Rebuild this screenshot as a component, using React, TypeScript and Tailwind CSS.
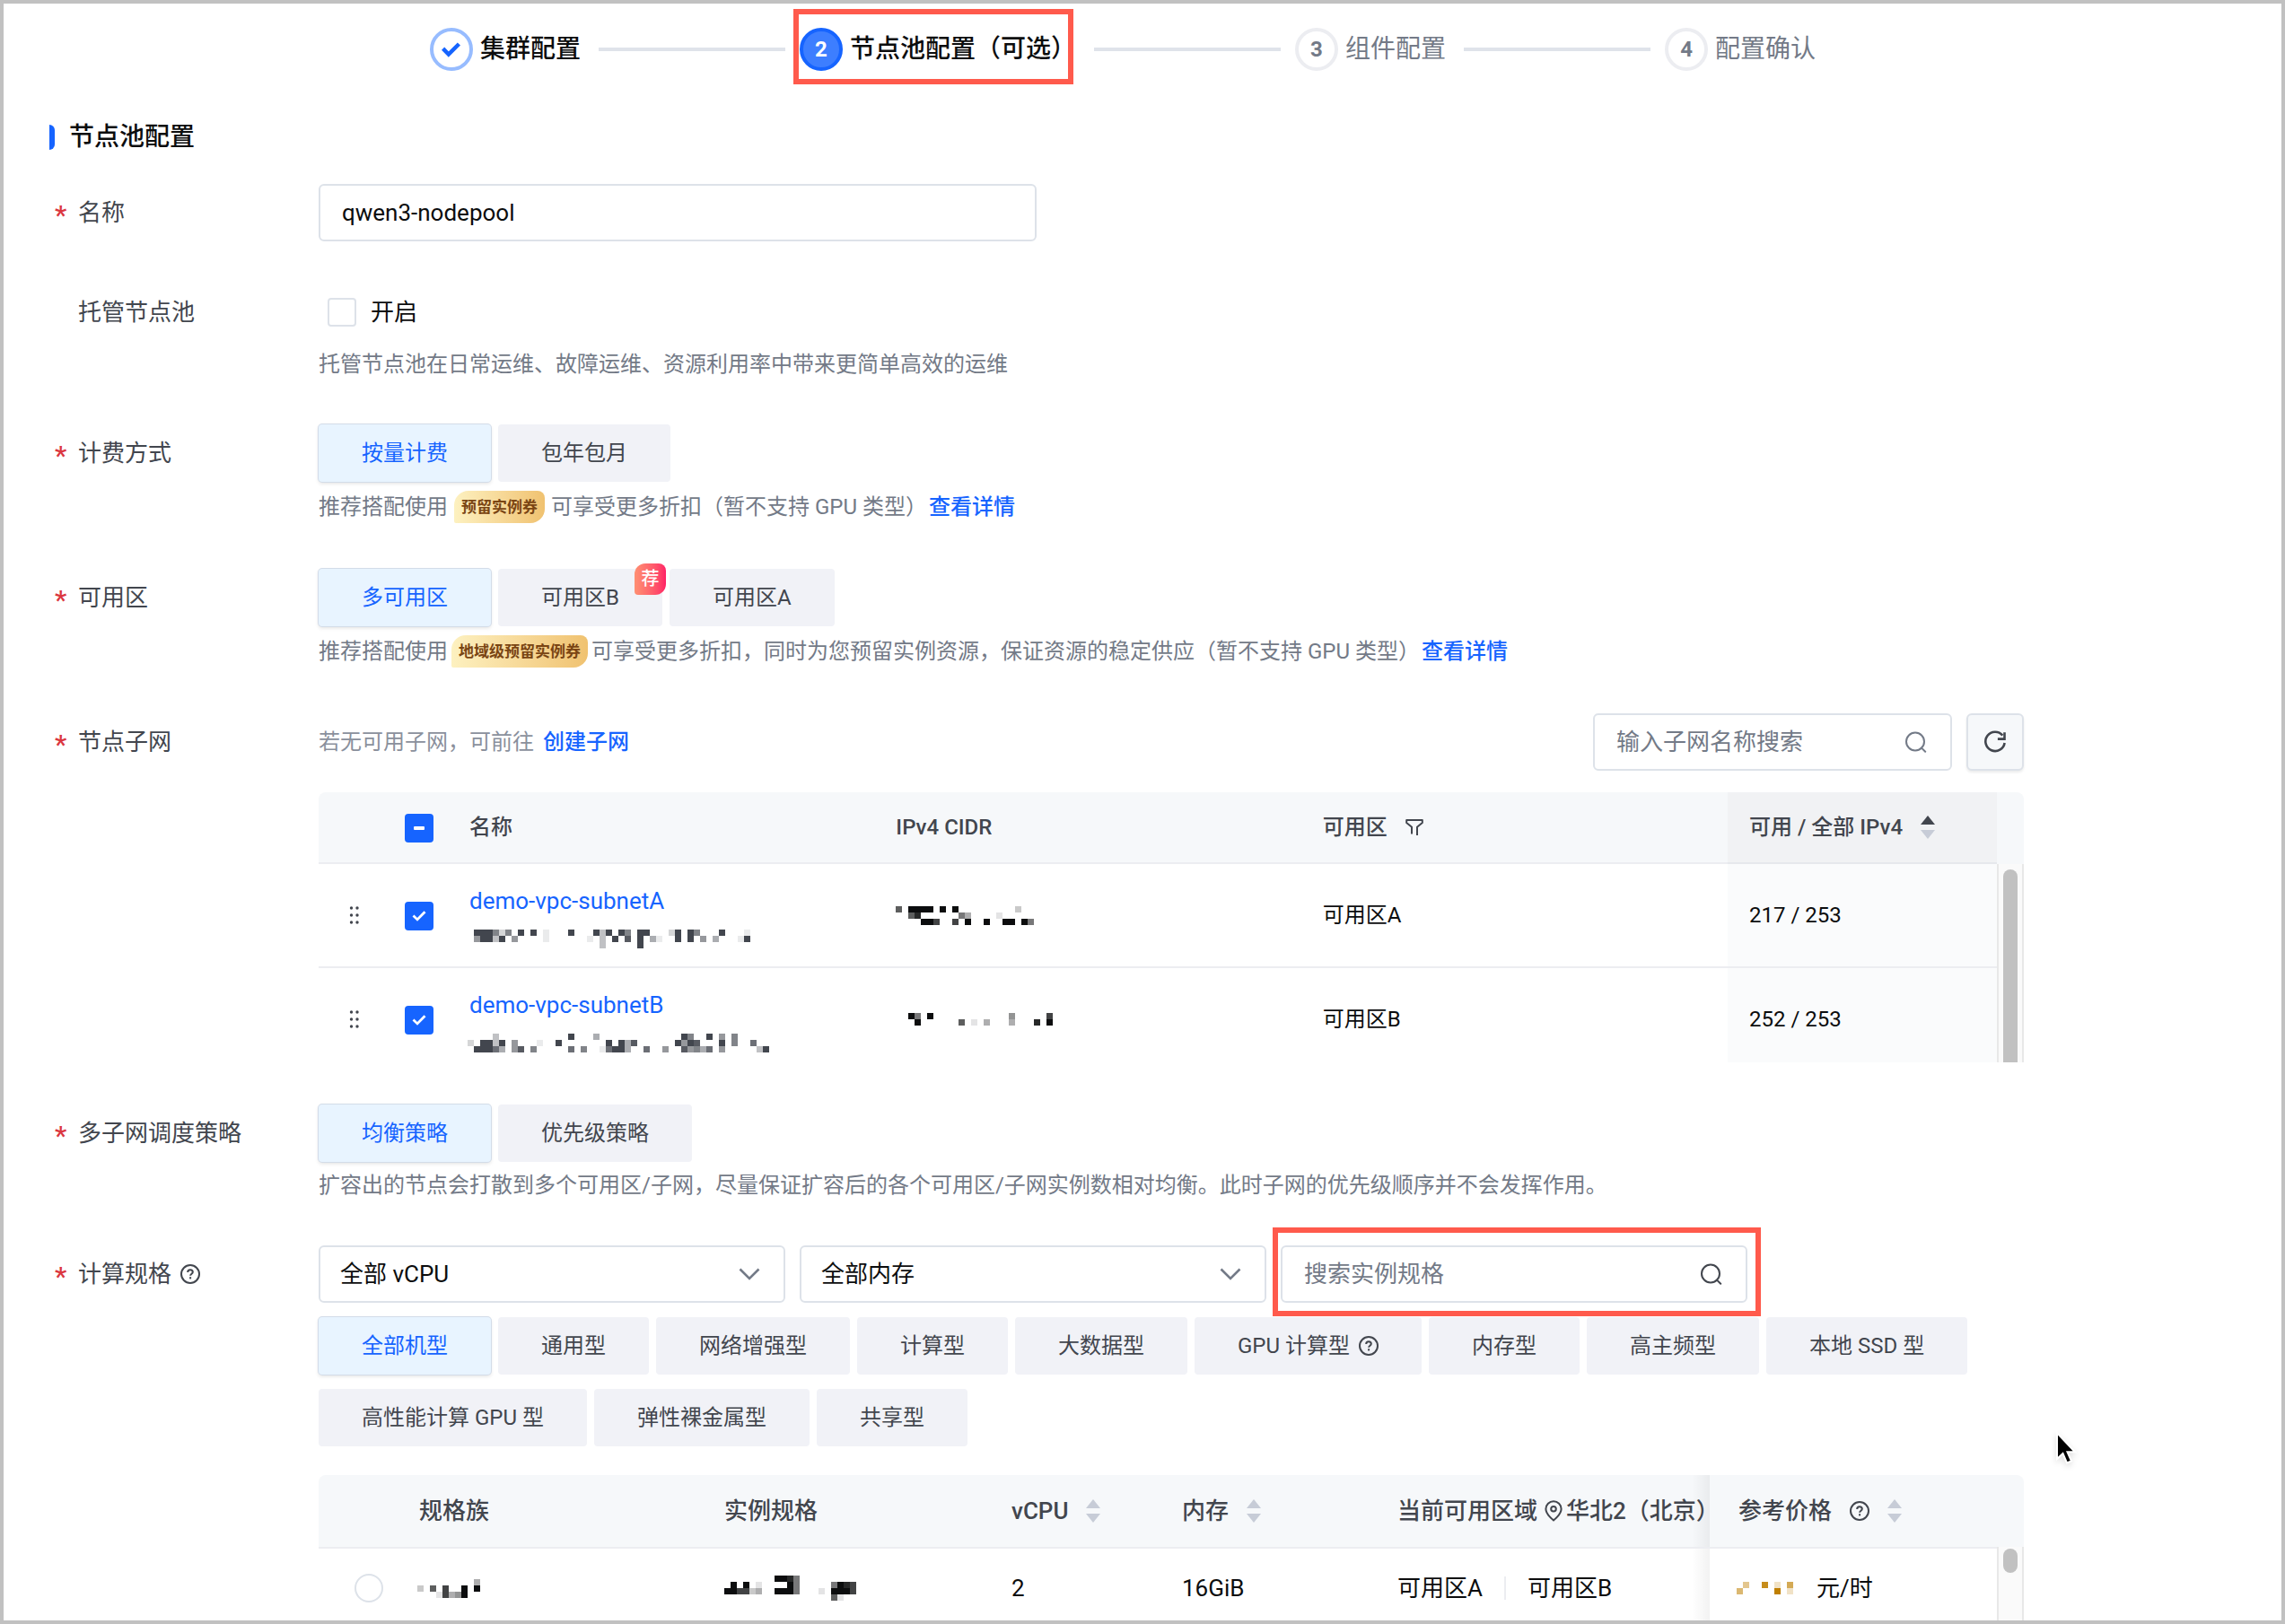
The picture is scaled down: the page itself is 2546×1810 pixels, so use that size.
import { useEffect, useRef } from "react";
import type { ReactNode } from "react";

/* ---------- icons ---------- */

function QuestionIcon() {
  return (
    <svg className="size-[22px] shrink-0" viewBox="0 0 22 22" fill="none" stroke="#42464e" strokeWidth="2" aria-hidden="true">
      <circle cx="11" cy="11" r="10" />
      <path d="M8.2 8.9c0-1.7 1.2-2.7 2.8-2.7s2.8 1 2.8 2.5c0 2-2.7 2-2.7 4.1" />
      <path d="M11.1 14.2v2.2" />
    </svg>
  );
}

function SearchIcon({ color }: { color: string }) {
  return (
    <svg className="size-6 shrink-0" viewBox="0 0 24 24" fill="none" stroke={color} strokeWidth="2" aria-hidden="true">
      <circle cx="11" cy="11.500" r="10" />
      <path d="M18 18.600l4.200 4.200" strokeLinecap="round" />
    </svg>
  );
}

function RefreshIcon() {
  return (
    <svg className="size-7" viewBox="0 0 28 28" fill="none" stroke="#42464e" strokeWidth="2.6" aria-hidden="true">
      <path d="M22.3 6.6A10.7 10.7 0 1 0 24.6 15" />
      <path d="M24.5 3.2v7.4h-7.6" />
    </svg>
  );
}

function FilterIcon() {
  return (
    <svg className="h-[20px] w-[20px]" viewBox="0 0 20 20" fill="none" stroke="#42464e" strokeWidth="2" strokeLinejoin="round" aria-hidden="true">
      <path d="M7 17.5V9.8L1.2 5V2h17.6v3L13 9.8V19" />
    </svg>
  );
}

function PinIcon() {
  return (
    <svg className="h-6 w-5" viewBox="0 0 20 24" fill="none" stroke="#42464e" strokeWidth="2" aria-hidden="true">
      <path d="M10 22.4S18.6 16 18.6 9.8a8.6 8.6 0 0 0-17.2 0C1.400 16 10 22.400 10 22.400z" />
      <circle cx="10" cy="9.800" r="2.800" />
    </svg>
  );
}

function SortIcon({ asc = false }: { asc?: boolean }) {
  return (
    <svg className="h-[26px] w-4" viewBox="0 0 16 26" aria-hidden="true">
      <path d="M8 0l8 10H0z" fill={asc ? "#42464e" : "#c7ccd7"} />
      <path d="M8 26l8-10H0z" fill="#c7ccd7" />
    </svg>
  );
}

function DragIcon() {
  return (
    <svg className="h-5 w-3" viewBox="0 0 12 20" fill="#42464e" aria-hidden="true">
      {[2, 10, 18].map((y) => (
        <g key={y}>
          <circle cx="2.500" cy={y} r="1.700" />
          <circle cx="9" cy={y} r="1.700" />
        </g>
      ))}
    </svg>
  );
}

function Cursor() {
  return (
    <svg className="pointer-events-none absolute top-[1590px] left-[2283px] h-[44px] w-[32px] drop-shadow-md" viewBox="0 0 32 44" aria-hidden="true">
      <path d="M5 3v29l6.500-6 4.500 10.500 5-2.200-4.500-10H25z" fill="#000" stroke="#fff" strokeWidth="2" />
    </svg>
  );
}

/* Pixelated redaction: each digit is a cell's strength from 1 to 9. */
function Mosaic({ rows, color }: { rows: string[]; color: string }) {
  const cols = Math.max(...rows.map((r) => r.length));
  return (
    <svg width={cols * 7} height={rows.length * 7} className="block shrink-0" shapeRendering="crispEdges" aria-hidden="true">
      {rows.flatMap((row, y) =>
        row.split("").map((c, x) =>
          c === "." ? null : (
            <rect key={`${x}-${y}`} x={x * 7} y={y * 7} width="7" height="7" fill={color} fillOpacity={Number(c) / 9} />
          ),
        ),
      )}
    </svg>
  );
}

/* ---------- building blocks ---------- */

function Step({ n, label, state }: { n: number; label: string; state: "done" | "current" | "todo" }) {
  const circle = {
    done: "border-[#97bcff] bg-white text-[#1664ff]",
    current: "border-[#1664ff] bg-[#3d7eff] text-white",
    todo: "border-[#ecedf1] bg-white text-[#737a87]",
  }[state];
  return (
    <li className="relative flex items-center gap-2">
      <span className={`flex size-12 items-center justify-center rounded-full border-4 text-2xl font-bold ${circle}`}>
        {state === "done" ? (
          <svg className="h-[17px] w-[21px]" viewBox="0 0 21 17" fill="none" stroke="currentColor" strokeWidth="4.500" aria-hidden="true">
            <path d="M1.600 7.200l6.200 6.300L19.400 2" />
          </svg>
        ) : (
          n
        )}
      </span>
      <span className={state === "todo" ? "text-[28px] leading-10 text-[#737a87]" : "text-[28px] leading-10 font-medium text-[#0c0d0e]"}>
        {label}
      </span>
      {state === "current" && (
        <span className="pointer-events-none absolute -top-[21px] right-[3px] -bottom-[15px] -left-[7px] border-6 border-[#ff5a4c]" />
      )}
    </li>
  );
}

function StepLine() {
  return <li aria-hidden="true" className="mr-4 ml-5 h-1 w-52 bg-[#dfe3ea]" />;
}

function Row({
  label,
  required = true,
  help = false,
  tight = false,
  htmlFor,
  children,
}: {
  label: string;
  required?: boolean;
  help?: boolean;
  tight?: boolean;
  htmlFor?: string;
  children: ReactNode;
}) {
  return (
    <div className={tight ? "mt-[47px] flex" : "mt-[51px] flex"}>
      <div className="flex h-16 w-[294px] shrink-0 items-center">
        <span className="w-[26px] pt-1.5 text-[30px] leading-8 font-medium text-[#db373f]">{required ? "*" : ""}</span>
        <label htmlFor={htmlFor} className="mr-2.5 text-[26px] leading-9 text-[#42464e]">
          {label}
        </label>
        {help && <QuestionIcon />}
      </div>
      <div className="max-w-[1900px] min-w-0 flex-1">{children}</div>
    </div>
  );
}

function Choice({ children, active = false, tag }: { children: ReactNode; active?: boolean; tag?: string }) {
  return (
    <button
      type="button"
      aria-pressed={active}
      className={
        active
          ? "relative flex h-16 items-center gap-2.5 rounded bg-[#e8f4ff] px-12 text-2xl text-[#1664ff] shadow-[0_0_0_1px_#d3dce8,0_2px_4px_#0000001f]"
          : "relative flex h-16 items-center gap-2.5 rounded bg-[#f1f2f7] px-12 text-2xl text-[#42464e]"
      }
    >
      {children}
      {tag && (
        <span className="absolute -top-1.5 -right-1 z-10 flex size-[35px] items-center justify-center rounded-tl-xl rounded-tr-lg rounded-br-xl rounded-bl-sm bg-linear-to-r from-[#ff8f72] to-[#ff1f66] text-[20px] font-medium text-white">
          {tag}
        </span>
      )}
    </button>
  );
}

function Coupon({ children, snug = false }: { children: ReactNode; snug?: boolean }) {
  return (
    <span
      className={`flex h-9 items-center rounded-tl-2xl rounded-tr-lg rounded-br-2xl rounded-bl-xs bg-linear-to-r from-[#fdf1c0] to-[#f0c270] px-2 text-[17px] font-bold text-[#7a4513] ${snug ? "mx-1" : "mx-[7px]"}`}
    >
      {children}
    </span>
  );
}

function Link({ children }: { children: ReactNode }) {
  return (
    <a href="#" className="ml-0.5 font-medium text-[#1664ff]">
      {children}
    </a>
  );
}

function CheckBox({ id, label, state }: { id?: string; label?: string; state: "off" | "on" | "mixed" }) {
  const ref = useRef<HTMLInputElement>(null);
  useEffect(() => {
    if (ref.current) ref.current.indeterminate = state === "mixed";
  }, [state]);
  return (
    <span className="inline-grid size-8 place-items-center align-middle">
      <input
        ref={ref}
        id={id}
        aria-label={label}
        type="checkbox"
        defaultChecked={state === "on"}
        className={
          state === "off"
            ? "col-start-1 row-start-1 size-8 appearance-none rounded border-2 border-[#dde2e9] bg-white"
            : "col-start-1 row-start-1 size-8 appearance-none rounded bg-[#1664ff]"
        }
      />
      {state === "on" && (
        <svg className="pointer-events-none col-start-1 row-start-1 h-3 w-4" viewBox="0 0 16 12" fill="none" stroke="#fff" strokeWidth="2.800" aria-hidden="true">
          <path d="M1.500 5.600l4.500 4.300L14.500 1.200" />
        </svg>
      )}
      {state === "mixed" && <span className="pointer-events-none col-start-1 row-start-1 h-1 w-3 rounded-[1px] bg-white" />}
    </span>
  );
}

function SelectBox({ label, value }: { label: string; value: string }) {
  return (
    <div className="relative w-[520px]">
      <select
        aria-label={label}
        className="h-16 w-full appearance-none rounded-md border-2 border-[#dde2e9] bg-white px-[22px] text-[26px] text-[#0c0d0e]"
      >
        <option>{value}</option>
      </select>
      <svg className="pointer-events-none absolute top-[25px] right-7 h-[14px] w-6" viewBox="0 0 24 14" fill="none" stroke="#737a87" strokeWidth="2.600" aria-hidden="true">
        <path d="M1.500 1.500L12 12 22.500 1.500" />
      </svg>
    </div>
  );
}

function SearchBox({ placeholder, iconColor, className }: { placeholder: string; iconColor: string; className: string }) {
  return (
    <div className={`flex h-16 items-center rounded-md border-2 border-[#dde2e9] bg-white pr-[26px] pl-6 ${className}`}>
      <input
        type="text"
        aria-label={placeholder}
        placeholder={placeholder}
        className="min-w-0 flex-1 text-[26px] text-[#0c0d0e] outline-none placeholder:text-[#737a87]"
      />
      <SearchIcon color={iconColor} />
    </div>
  );
}

function ScrollTrack({ thumb }: { thumb: string }) {
  return (
    <div className="flex w-[30px] shrink-0 flex-col">
      <div className="h-20 rounded-tr-lg bg-[#f6f8fa]" />
      <div className="flex flex-1 justify-center border-x-2 border-[#e8e8e8] bg-[#fafafa]">
        <div className={`w-4 bg-[#c1c1c1] ${thumb}`} />
      </div>
    </div>
  );
}

/* ---------- data ---------- */

const subnets = [
  {
    name: "demo-vpc-subnetA",
    zone: "可用区A",
    ips: "217 / 253",
    id: [
      ".999626.9.9.1...9...939.96.99...29.96...9...1",
      ".59939.5....1......1.3.9.8.9.41..9.9.5.4...19",
      ".....................3.....9",
    ],
    cidr: ["6.9999.9.9.........2", "..68......53....1", "....997..7.9..9..99.95"],
  },
  {
    name: "demo-vpc-subnetB",
    zone: "可用区B",
    ips: "252 / 253",
    id: [
      "....3...........9...4.............96..9.5.6",
      "2.9939.5...1..9.......9.948......9598...9.6..7",
      ".99974.58.6.....7.6..17994..7..5..85647.5.....39",
    ],
    cidr: ["..95.9............4.....7", "...9......6.1.3...3...8.9"],
  },
];

const machineTypes = [
  "全部机型",
  "通用型",
  "网络增强型",
  "计算型",
  "大数据型",
  "GPU 计算型",
  "内存型",
  "高主频型",
  "本地 SSD 型",
  "高性能计算 GPU 型",
  "弹性裸金属型",
  "共享型",
];

const headCell = "h-20 border-b-2 border-[#ecedf1] bg-[#f6f8fa] px-6 text-left font-medium whitespace-nowrap text-[#42464e]";

/* ---------- tables ---------- */

function SubnetTable() {
  return (
    <div className="mt-6 flex h-[301px] overflow-hidden">
      <div className="min-w-0 flex-1">
        <table className="w-full table-fixed border-separate border-spacing-0 text-2xl text-[#0c0d0e]">
          <colgroup>
            <col className="w-20" />
            <col className="w-16" />
            <col />
            <col />
            <col />
            <col className="w-[300px]" />
          </colgroup>
          <thead>
            <tr>
              <th className="h-20 rounded-tl-lg border-b-2 border-[#ecedf1] bg-[#f6f8fa]" />
              <th className="h-20 border-b-2 border-[#ecedf1] bg-[#f6f8fa] p-0 text-center">
                <CheckBox label="全选" state="mixed" />
              </th>
              <th className={headCell}>名称</th>
              <th className={headCell}>IPv4 CIDR</th>
              <th className={headCell}>
                <span className="flex items-center gap-5">
                  可用区
                  <FilterIcon />
                </span>
              </th>
              <th className="h-20 border-b-2 border-[#e6e8ec] bg-[#f1f2f4] px-6 text-left font-medium whitespace-nowrap text-[#42464e]">
                <span className="flex items-center gap-5">
                  可用 / 全部 IPv4
                  <SortIcon asc />
                </span>
              </th>
            </tr>
          </thead>
          <tbody>
            {subnets.map((s) => (
              <tr key={s.name}>
                <td className="h-[116px] border-b-2 border-[#ecedf1] p-0">
                  <span className="flex justify-center">
                    <DragIcon />
                  </span>
                </td>
                <td className="border-b-2 border-[#ecedf1] p-0 text-center">
                  <CheckBox label={s.name} state="on" />
                </td>
                <td className="border-b-2 border-[#ecedf1] px-6 pt-1">
                  <a href="#" className="block text-[26px] leading-8 text-[#1664ff]">
                    {s.name}
                  </a>
                  <div className="mt-4 -ml-0.5">
                    <Mosaic rows={s.id} color="#42464e" />
                  </div>
                </td>
                <td className="border-b-2 border-[#ecedf1] px-6">
                  <Mosaic rows={s.cidr} color="#0c0d0e" />
                </td>
                <td className="border-b-2 border-[#ecedf1] px-6">{s.zone}</td>
                <td className="border-b-2 border-[#ecedf1] bg-[#fafbfc] px-6">{s.ips}</td>
              </tr>
            ))}
          </tbody>
        </table>
      </div>
      <ScrollTrack thumb="mt-1.5 rounded-t-full" />
    </div>
  );
}

function FixedShadow() {
  return <span className="absolute inset-y-0 right-full w-5 bg-linear-to-r from-transparent to-black/5" />;
}

function SpecTable() {
  return (
    <div className="mt-8 flex">
      <div className="min-w-0 flex-1">
        <table className="w-full table-fixed border-separate border-spacing-0 text-[26px] text-[#0c0d0e]">
          <colgroup>
            <col className="w-[88px]" />
            <col className="w-[340px]" />
            <col />
            <col className="w-[190px]" />
            <col className="w-60" />
            <col className="w-[372px]" />
            <col className="w-80" />
          </colgroup>
          <thead>
            <tr>
              <th className="h-[82px] rounded-tl-lg border-b-2 border-[#ecedf1] bg-[#f6f8fa]" />
              <th className={headCell}>规格族</th>
              <th className={headCell}>实例规格</th>
              <th className={headCell}>
                <span className="flex items-center gap-5">
                  vCPU
                  <SortIcon />
                </span>
              </th>
              <th className={headCell}>
                <span className="flex items-center gap-5">
                  内存
                  <SortIcon />
                </span>
              </th>
              <th className="border-b-2 border-[#ecedf1] bg-[#f6f8fa] pr-0 pl-6 text-left font-medium whitespace-nowrap text-[#42464e]">
                <span className="flex items-center">
                  当前可用区域
                  <span className="mr-1 ml-2 shrink-0">
                    <PinIcon />
                  </span>
                  华北2（北京）
                </span>
              </th>
              <th className="relative border-b-2 border-[#ecedf1] bg-[#f6f8fa] pr-6 pl-8 text-left font-medium whitespace-nowrap text-[#42464e]">
                <FixedShadow />
                <span className="flex items-center gap-5">
                  参考价格
                  <QuestionIcon />
                  <SortIcon />
                </span>
              </th>
            </tr>
          </thead>
          <tbody>
            <tr>
              <td className="h-[88px] p-0 pl-10">
                <input
                  type="radio"
                  name="spec"
                  aria-label="选择规格"
                  className="block size-8 appearance-none rounded-full border-2 border-[#dde2e9] bg-white"
                />
              </td>
              <td className="px-[22px]">
                <Mosaic rows={[".........3", "2.6.7..9.9", "...17349"]} color="#0c0d0e" />
              </td>
              <td className="px-6">
                <Mosaic
                  rows={["........9985", ".9.9.1....95.....5987", "997723..9995...1.9997", ".................61"]}
                  color="#0c0d0e"
                />
              </td>
              <td className="px-6">2</td>
              <td className="px-6">16GiB</td>
              <td className="pl-6">
                <span className="flex items-center">
                  可用区A
                  <span className="mx-6 h-[26px] w-0.5 bg-[#ecedf1]" />
                  可用区B
                </span>
              </td>
              <td className="relative pl-[30px]">
                <FixedShadow />
                <span className="flex items-center gap-[26px]">
                  <Mosaic rows={[".4..8.2.6", "5.....9.2"]} color="#bf7f00" />
                  元/时
                </span>
              </td>
            </tr>
          </tbody>
        </table>
      </div>
      <ScrollTrack thumb="mt-0.5 h-[27px] rounded-full" />
    </div>
  );
}

/* ---------- page ---------- */

export default function App() {
  return (
    <div className="relative h-screen overflow-hidden border-4 border-[#c1c1c1] bg-white font-[Roboto,'Noto_Sans_CJK_SC',sans-serif]">
      <ol className="flex items-center justify-center pt-[27px] pr-[44px]">
        <Step n={1} label="集群配置" state="done" />
        <StepLine />
        <Step n={2} label="节点池配置（可选）" state="current" />
        <StepLine />
        <Step n={3} label="组件配置" state="todo" />
        <StepLine />
        <Step n={4} label="配置确认" state="todo" />
      </ol>

      <main className="pl-[51px]">
        <h2 className="mt-[54px] flex items-center gap-4 text-[28px] leading-10 font-medium text-[#0c0d0e]">
          <span className="h-7 w-1.5 rounded-r-full bg-[#1664ff]" />
          节点池配置
        </h2>

        <form className="-mt-[19px] pl-1.5">
          <Row label="名称" htmlFor="pool-name">
            <input
              id="pool-name"
              type="text"
              defaultValue="qwen3-nodepool"
              className="block h-16 w-[800px] rounded-md border-2 border-[#dde2e9] px-6 text-[26px] text-[#0c0d0e]"
            />
          </Row>

          <Row label="托管节点池" required={false} tight htmlFor="managed">
            <div className="flex h-16 items-center gap-4 pl-2.5">
              <CheckBox id="managed" state="off" />
              <label htmlFor="managed" className="text-[26px] leading-9 text-[#0c0d0e]">
                开启
              </label>
            </div>
            <p className="mt-2.5 text-2xl text-[#737a87]">托管节点池在日常运维、故障运维、资源利用率中带来更简单高效的运维</p>
          </Row>

          <Row label="计费方式">
            <div className="flex gap-2">
              <Choice active>按量计费</Choice>
              <Choice>包年包月</Choice>
            </div>
            <p className="mt-2.5 flex h-9 items-center text-2xl text-[#737a87]">
              推荐搭配使用
              <Coupon>预留实例券</Coupon>
              可享受更多折扣（暂不支持 GPU 类型）
              <Link>查看详情</Link>
            </p>
          </Row>

          <Row label="可用区">
            <div className="flex gap-2">
              <Choice active>多可用区</Choice>
              <Choice tag="荐">可用区B</Choice>
              <Choice>可用区A</Choice>
            </div>
            <p className="mt-2.5 flex h-9 items-center text-2xl text-[#737a87]">
              推荐搭配使用
              <Coupon snug>地域级预留实例券</Coupon>
              可享受更多折扣，同时为您预留实例资源，保证资源的稳定供应（暂不支持 GPU 类型）
              <Link>查看详情</Link>
            </p>
          </Row>

          <Row label="节点子网">
            <div className="flex items-center gap-4">
              <p className="flex flex-1 gap-2 text-2xl text-[#8a909c]">
                若无可用子网，可前往
                <Link>创建子网</Link>
              </p>
              <SearchBox placeholder="输入子网名称搜索" iconColor="#737a87" className="w-[400px]" />
              <button
                type="button"
                aria-label="刷新"
                className="flex size-16 items-center justify-center rounded-md border-2 border-[#dde2e9] bg-[#f6f8fa] shadow-[0_2px_3px_#00000014]"
              >
                <RefreshIcon />
              </button>
            </div>
            <SubnetTable />
          </Row>

          <Row label="多子网调度策略" tight>
            <div className="flex gap-2">
              <Choice active>均衡策略</Choice>
              <Choice>优先级策略</Choice>
            </div>
            <p className="mt-2.5 text-2xl text-[#737a87]">
              扩容出的节点会打散到多个可用区/子网，尽量保证扩容后的各个可用区/子网实例数相对均衡。此时子网的优先级顺序并不会发挥作用。
            </p>
          </Row>

          <Row label="计算规格" help>
            <div className="flex gap-4">
              <SelectBox label="vCPU" value="全部 vCPU" />
              <SelectBox label="内存" value="全部内存" />
              <div className="relative">
                <SearchBox placeholder="搜索实例规格" iconColor="#42464e" className="w-[520px]" />
                <span className="pointer-events-none absolute -top-5 -right-[15px] -bottom-[15px] -left-[9px] border-6 border-[#ff5a4c]" />
              </div>
            </div>
            <div className="mt-4 flex flex-wrap gap-x-2 gap-y-4">
              {machineTypes.map((t, i) => (
                <Choice key={t} active={i === 0}>
                  {t}
                  {t === "GPU 计算型" && <QuestionIcon />}
                </Choice>
              ))}
            </div>
            <SpecTable />
          </Row>
        </form>
      </main>
      <Cursor />
    </div>
  );
}
